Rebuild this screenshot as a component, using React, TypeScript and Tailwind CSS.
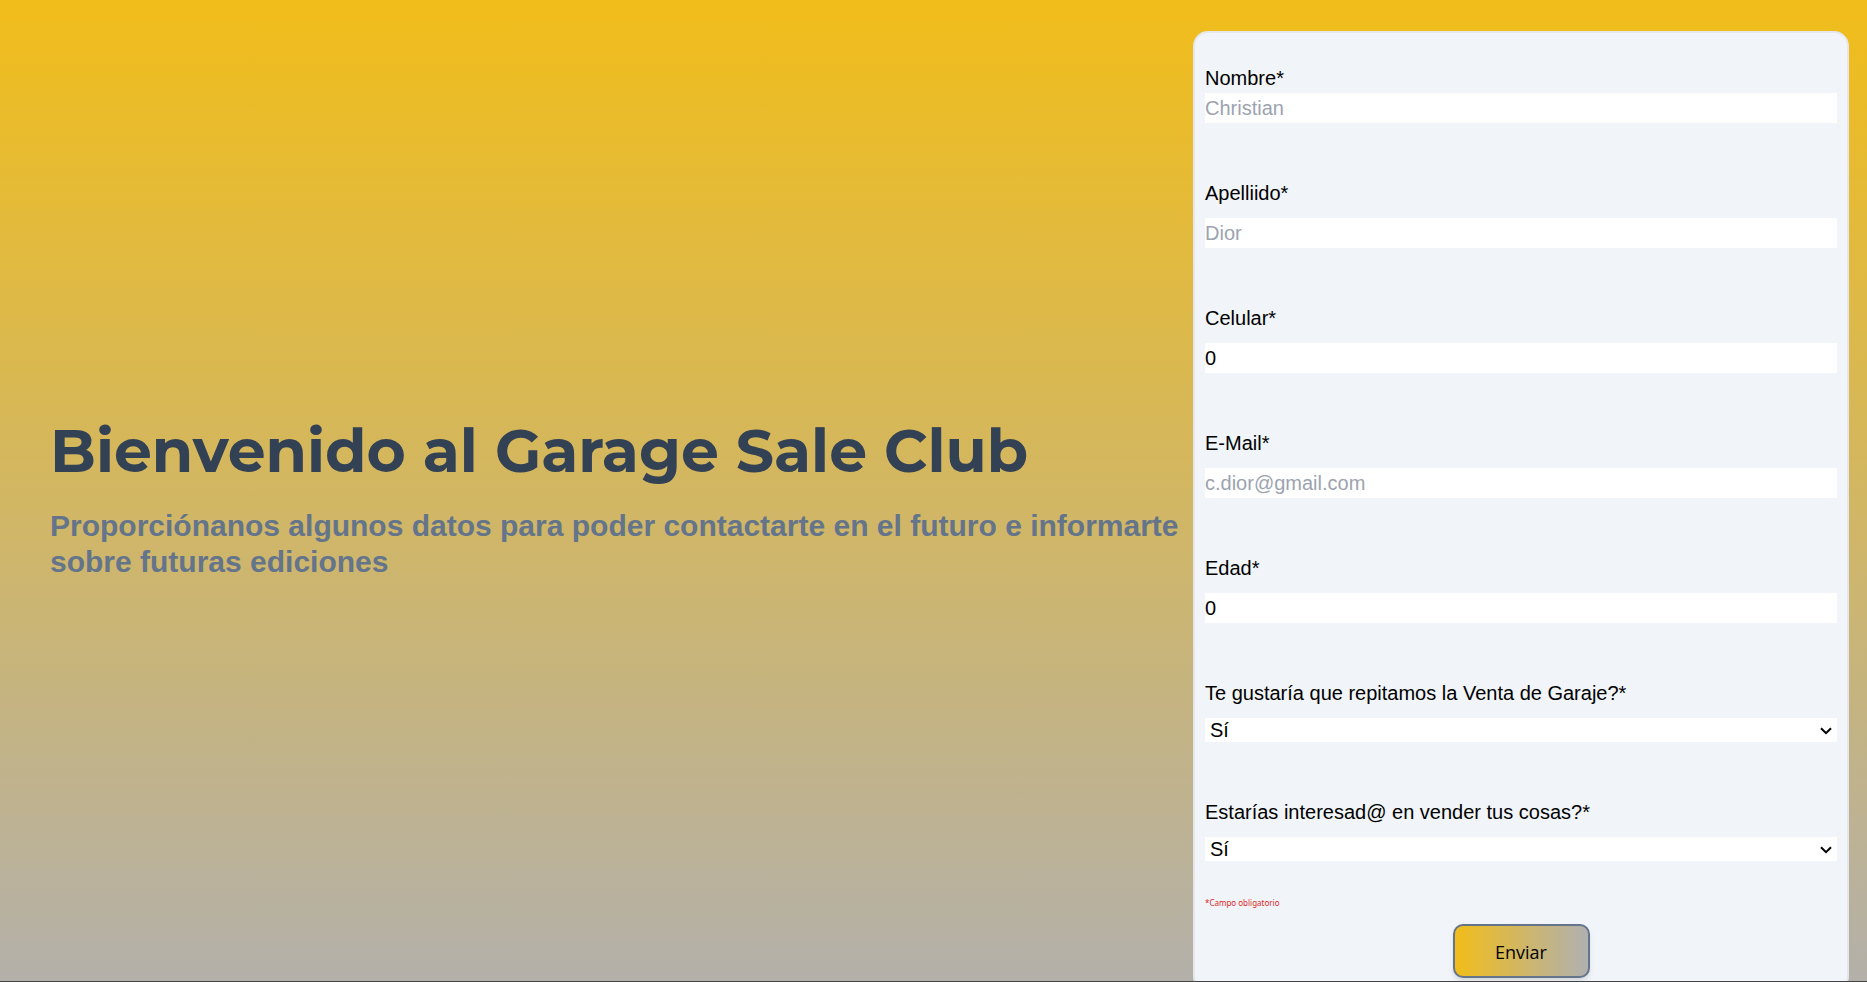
import { useState } from "react";

type TextField = {
  id: string;
  label: string;
  type: string;
  placeholder?: string;
  initial?: string;
};

const textFields: TextField[] = [
  { id: "nombre", label: "Nombre*", type: "text", placeholder: "Christian" },
  { id: "apellido", label: "Apelliido*", type: "text", placeholder: "Dior" },
  { id: "celular", label: "Celular*", type: "text", initial: "0" },
  { id: "email", label: "E-Mail*", type: "email", placeholder: "c.dior@gmail.com" },
  { id: "edad", label: "Edad*", type: "text", initial: "0" },
];

const questions = [
  { id: "repetir", label: "Te gustaría que repitamos la Venta de Garaje?*" },
  { id: "vender", label: "Estarías interesad@ en vender tus cosas?*" },
];

function Field({ field, first }: { field: TextField; first: boolean }) {
  const [value, setValue] = useState(field.initial ?? "");
  return (
    <div className={first ? "flex flex-col" : "flex flex-col gap-[10px]"}>
      <label htmlFor={field.id}>{field.label}</label>
      <input
        id={field.id}
        type={field.type}
        value={value}
        placeholder={field.placeholder}
        onChange={(e) => setValue(e.target.value)}
        className="h-[30px] w-full bg-white placeholder:text-[#9ca3af] focus:outline-none"
      />
    </div>
  );
}

function Question({ id, label }: { id: string; label: string }) {
  return (
    <div className="flex flex-col gap-[10px]">
      <label htmlFor={id}>{label}</label>
      <div className="relative h-6">
        <select id={id} className="block h-6 w-full appearance-none bg-white px-[5px] leading-6 focus:outline-none">
          <option>Sí</option>
          <option>No</option>
        </select>
        <svg
          aria-hidden="true"
          viewBox="0 0 12 8"
          className="pointer-events-none absolute top-[9px] right-[5px] h-2 w-3 fill-none stroke-black stroke-2"
        >
          <path d="M1 1.2 L6 6.2 L11 1.2" />
        </svg>
      </div>
    </div>
  );
}

export default function App() {
  return (
    <main className="grid h-screen grid-cols-[1193fr_656fr] overflow-hidden border-b border-[#444444] bg-linear-to-b/srgb from-[#f1bd1a] to-[#b3b0aa] pr-[18px] font-['Liberation_Sans',Arial,sans-serif]">
      <section className="flex flex-col justify-center pt-[3px] pl-[50px]">
        <h1 className="font-[Montserrat,Inter,sans-serif] text-[60px] leading-[72px] font-bold text-[#334155]">
          Bienvenido al Garage Sale Club
        </h1>
        <h2 className="mt-[21px] text-[30px] leading-9 font-bold text-[#64748b]">
          Proporciónanos algunos datos para poder contactarte en el futuro e informarte sobre futuras ediciones
        </h2>
      </section>
      <form
        onSubmit={(e) => e.preventDefault()}
        className="mt-[31px] flex flex-col self-start rounded-[15px] border-2 border-gray-200 bg-slate-100 px-[10px] pt-[30px] pb-[11px] text-[20px] leading-[30px] text-black"
      >
        <div className="flex flex-col gap-[55px]">
          {textFields.map((field, i) => (
            <Field key={field.id} field={field} first={i === 0} />
          ))}
          {questions.map((q) => (
            <Question key={q.id} id={q.id} label={q.label} />
          ))}
        </div>
        <p className="mt-9 font-['Noto_Sans',sans-serif] text-[8px] leading-3 text-[#dc2626]">
          *Campo obligatorio
        </p>
        <button
          type="submit"
          className="mt-[15px] h-[54px] w-[137px] self-center rounded-[10px] border-2 border-[#64748b] bg-linear-to-r/srgb from-[#f1bd1a] to-[#b0b0b0] pt-px font-['Open_Sans',sans-serif] text-[18px] shadow-md"
        >
          Enviar
        </button>
      </form>
    </main>
  );
}
